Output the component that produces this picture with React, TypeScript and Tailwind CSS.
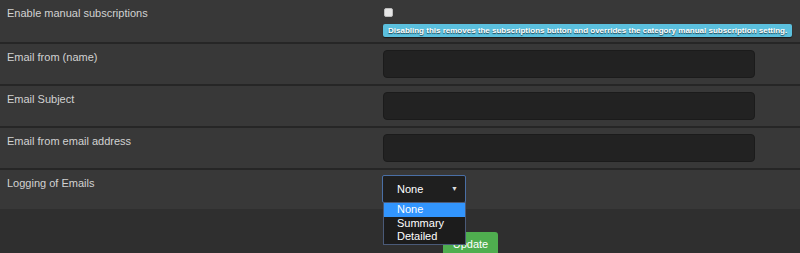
import { useState } from "react";

const rows = ["Email from (name)", "Email Subject", "Email from email address"];

function Label({ text }: { text: string }) {
  return (
    <div className="pl-[7px] pt-[6px] text-[11px] leading-[14px] text-[#d2d2d2]">
      {text}
    </div>
  );
}

export default function App() {
  const [logging] = useState("None");

  return (
    <div
      className="min-h-[253px] w-[800px] overflow-hidden bg-[#2f2f2f]"
      style={{ fontFamily: '"Liberation Sans", Arial, sans-serif' }}
    >
      <div className="bg-[#383838]">
        {/* subscriptions toggle */}
        <div className="grid h-[44px] grid-cols-[383px_1fr] border-b-2 border-[#262626]">
          <Label text="Enable manual subscriptions" />
          <div className="flex flex-col items-start pt-[8px]">
            <div className="ml-[1px] h-[9px] w-[9px] rounded-[2px] border border-[#bdbdbd] bg-[#e6e6e6]" />
            <div className="mt-[7px] h-[13px] w-[409px] whitespace-nowrap rounded-[2px] bg-[#5bc0de] pl-[5px] text-[8px] font-bold leading-[13px] text-white [text-shadow:0_1px_1px_#1c3c48] shadow-[0_1px_1px_#1a1a1a]">
              Disabling this removes the subscriptions button and overrides the
              category manual subscription setting.
            </div>
          </div>
        </div>

        {rows.map((r) => (
          <div
            key={r}
            className="grid h-[42px] grid-cols-[383px_1fr] border-b-2 border-[#262626]"
          >
            <Label text={r} />
            <div className="pt-[6px]">
              <div className="h-[28px] w-[372px] rounded-[4px] border border-[#1b1b1b] bg-[#222222]" />
            </div>
          </div>
        ))}

        <div className="grid h-[39px] grid-cols-[382px_1fr]">
          <Label text={"Logging of Emails"} />
          <div className="relative pt-[5px]">
            <div className="flex h-[28px] w-[84px] items-center justify-between rounded-[2px] border border-[#4a6fa5] bg-[#1f1f1f] pl-[14px] pr-[7px] text-[11px] text-white">
              <span>{logging}</span>
              <span className="text-[7px] text-[#dddddd]">▼</span>
            </div>
            <div className="absolute left-[1px] top-[32px] z-10 w-[83px] border border-[#4a5a78] bg-[#1c1c1c] text-[11px] leading-[13.5px] text-white">
              <div className="bg-[#3295fd] pl-[13px]">None</div>
              <div className="pl-[13px]">Summary</div>
              <div className="pl-[13px]">Detailed</div>
            </div>
          </div>
        </div>
      </div>

      <div className="pl-[443px] pt-[22px]">
        <button
          type="button"
          className="h-[26px] w-[55px] rounded-[3px] bg-[#4fae4f] pb-[2px] text-[11px] text-white"
        >
          Update
        </button>
      </div>
    </div>
  );
}
